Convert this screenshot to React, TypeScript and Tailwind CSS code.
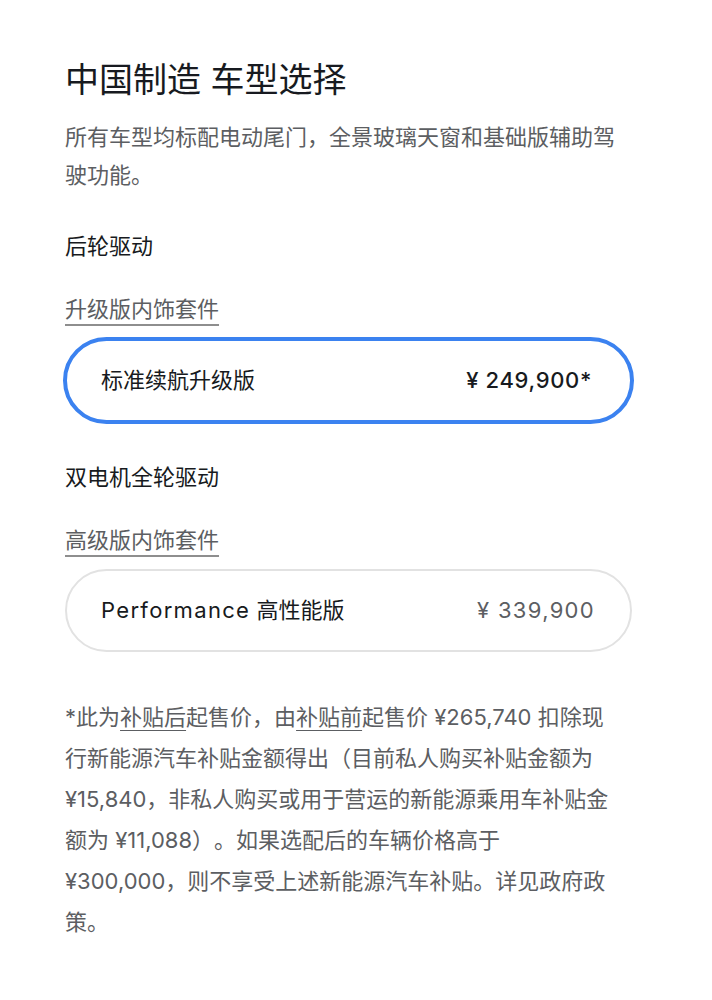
import React from "react";

const font = {
  fontFamily: 'Inter, "Noto Sans CJK SC", "Noto Sans", sans-serif',
};

function TrimCard({
  name,
  price,
  selected,
}: {
  name: React.ReactNode;
  price: string;
  selected?: boolean;
}) {
  return selected ? (
    <div className="-mx-[2px] flex h-[87px] items-center justify-between rounded-full border-[4px] border-[#3b82f0] pl-[34px] pr-[38px]">
      <span className="text-[22px] text-[#171a20]">{name}</span>
      <span className="text-[22px] font-medium tracking-[0.03em] text-[#171a20]">
        {price}
      </span>
    </div>
  ) : (
    <div className="flex h-[83px] items-center justify-between rounded-full border-2 border-[#e2e2e2] pl-[34px] pr-[35px]">
      <span className="text-[22px] text-[#171a20]">{name}</span>
      <span className="text-[22px] tracking-[0.06em] text-[#5c5e62]">{price}</span>
    </div>
  );
}

function LinkLabel({ children }: { children: React.ReactNode }) {
  return (
    <div className="text-[22px] leading-[32px]">
      <span className="text-[#5c5e62] underline decoration-[#8e8e8e] decoration-2 underline-offset-[7px]">
        {children}
      </span>
    </div>
  );
}

const footnoteLines: React.ReactNode[] = [
  <>
    *此为
    <span className="underline decoration-1 underline-offset-[5px]">补贴后</span>
    起售价，由
    <span className="underline decoration-1 underline-offset-[5px]">补贴前</span>
    起售价 ¥265,740 扣除现
  </>,
  "行新能源汽车补贴金额得出（目前私人购买补贴金额为",
  "¥15,840，非私人购买或用于营运的新能源乘用车补贴金",
  "额为 ¥11,088）。如果选配后的车辆价格高于",
  "¥300,000，则不享受上述新能源汽车补贴。详见政府政",
  "策。",
];

export default function App() {
  return (
    <div className="min-h-screen bg-white [text-spacing-trim:space-all]" style={font}>
      <div className="ml-[64px] w-[568px] pl-[1px] pt-[57px] pb-[40px]">
        <h1 className="text-[34px] leading-[46px] font-normal text-[#171a20]">
          中国制造 车型选择
        </h1>
        <p className="mt-[15px] text-[22px] leading-[38px] text-[#5c5e62]">
          所有车型均标配电动尾门，全景玻璃天窗和基础版辅助驾驶功能。
        </p>

        <h2 className="mt-[36px] text-[22px] leading-[32px] text-[#171a20]">
          后轮驱动
        </h2>
        <div className="mt-[31px]">
          <LinkLabel>升级版内饰套件</LinkLabel>
        </div>
        <div className="mt-[12px]">
          <TrimCard name="标准续航升级版" price="¥ 249,900*" selected />
        </div>

        <h2 className="mt-[37px] text-[22px] leading-[32px] text-[#171a20]">
          双电机全轮驱动
        </h2>
        <div className="mt-[31px]">
          <LinkLabel>高级版内饰套件</LinkLabel>
        </div>
        <div className="mt-[13px]">
          <TrimCard
            name={
              <>
                <span className="tracking-[0.06em]">Performance</span> 高性能版
              </>
            }
            price="¥ 339,900"
          />
        </div>

        <p className="mt-[45px] text-[22px] leading-[41px] text-[#5c5e62]">
          {footnoteLines.map((line, i) => (
            <span key={i} className="block whitespace-nowrap">
              {line}
            </span>
          ))}
        </p>
      </div>
    </div>
  );
}
